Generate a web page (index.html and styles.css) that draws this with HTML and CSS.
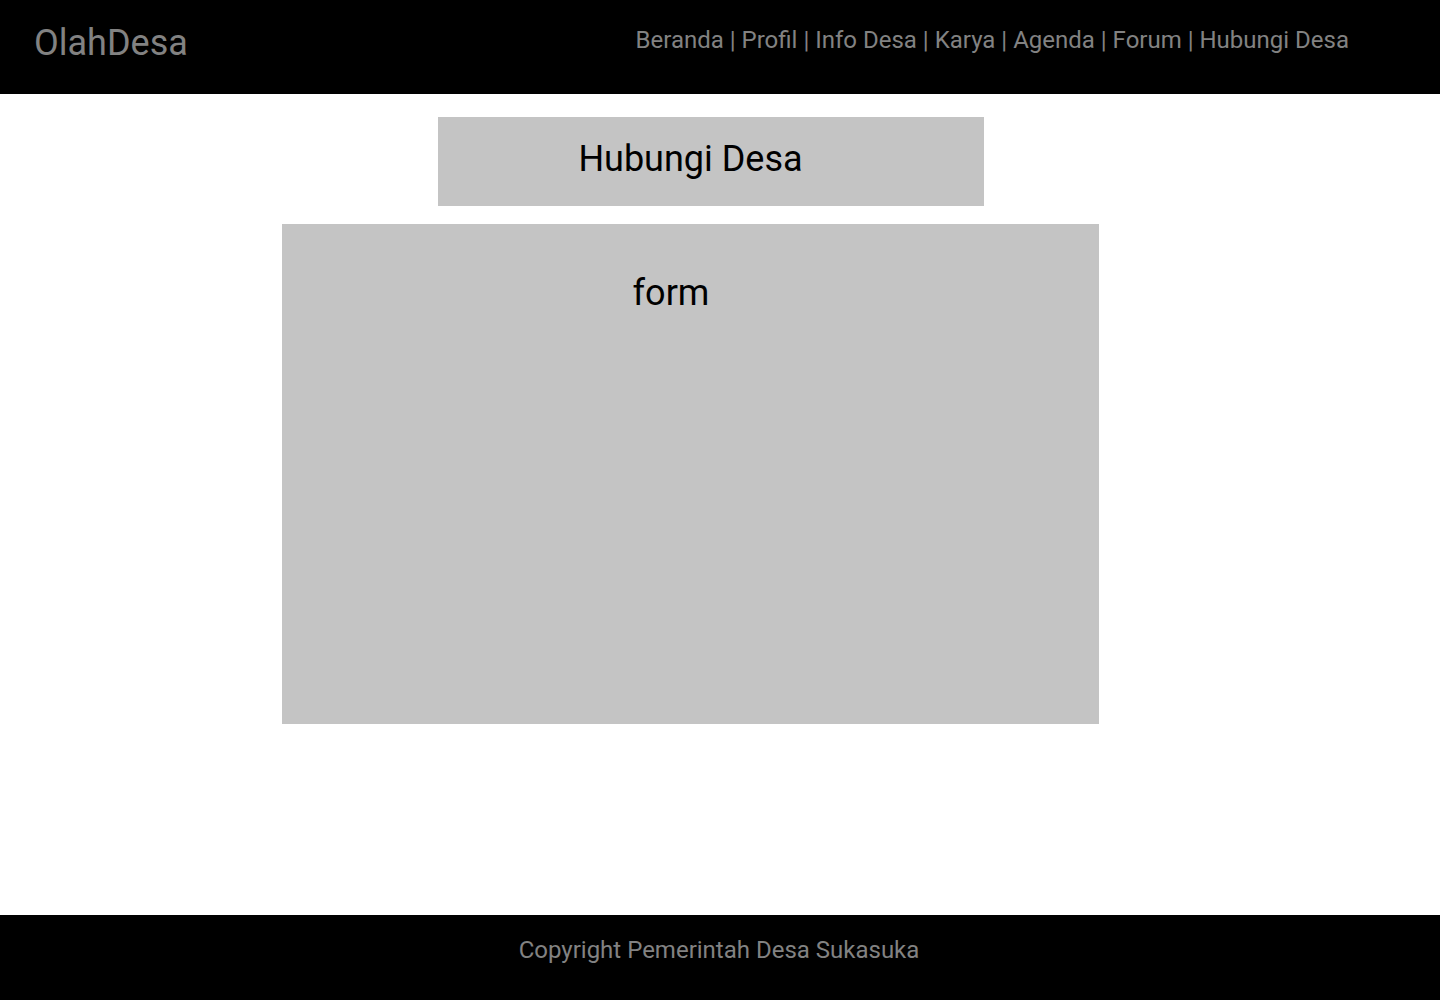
FILE: index.html
```html
<!DOCTYPE html>
<html lang="id">
<head>
<meta charset="utf-8">
<meta name="viewport" content="width=device-width, initial-scale=1">
<title>Hubungi Desa - OlahDesa</title>
<link rel="stylesheet" href="styles.css">
</head>
<body>
<header class="site-header">
  <a class="brand" href="#">OlahDesa</a>
  <nav class="site-nav"><a href="#">Beranda</a> | <a href="#">Profil</a> | <a href="#">Info Desa</a> | <a href="#">Karya</a> | <a href="#">Agenda</a> | <a href="#">Forum</a> | <a href="#">Hubungi Desa</a></nav>
</header>
<main class="content">
  <h1 class="page-title">Hubungi Desa</h1>
  <section class="form-panel">form</section>
</main>
<footer class="site-footer">Copyright Pemerintah Desa Sukasuka</footer>
</body>
</html>
```
FILE: styles.css
```css
* {
  box-sizing: border-box;
}

body {
  display: flex;
  flex-direction: column;
  min-height: 100vh;
  margin: 0;
  background: #fff;
  color: #000;
  font-family: Roboto, "Liberation Sans", sans-serif;
  font-size: 24px;
  line-height: 28px;
}

a {
  color: inherit;
  text-decoration: none;
}

.site-header {
  display: flex;
  justify-content: space-between;
  align-items: flex-start;
  gap: 24px;
  padding: 22px 91px 30px 34px;
  background: #000;
  color: #828282;
}

.brand {
  font-size: 36px;
  line-height: 42px;
}

.site-nav {
  padding-top: 4px;
}

.content {
  display: flex;
  flex: 1;
  flex-direction: column;
  align-items: center;
  gap: 18px;
  padding: 23px 59px 24px 0;
}

.page-title,
.form-panel {
  width: 100%;
  background: #c4c4c4;
  font-size: 36px;
  font-weight: 400;
  line-height: 42px;
  text-align: center;
}

.page-title {
  max-width: 546px;
  margin: 0 0 0 41px;
  padding: 21px 41px 26px 0;
}

.form-panel {
  max-width: 817px;
  min-height: 500px;
  padding: 48px 39px 48px 0;
}

.site-footer {
  padding: 21px 26px 36px 24px;
  background: #000;
  color: #828282;
  text-align: center;
}
```
